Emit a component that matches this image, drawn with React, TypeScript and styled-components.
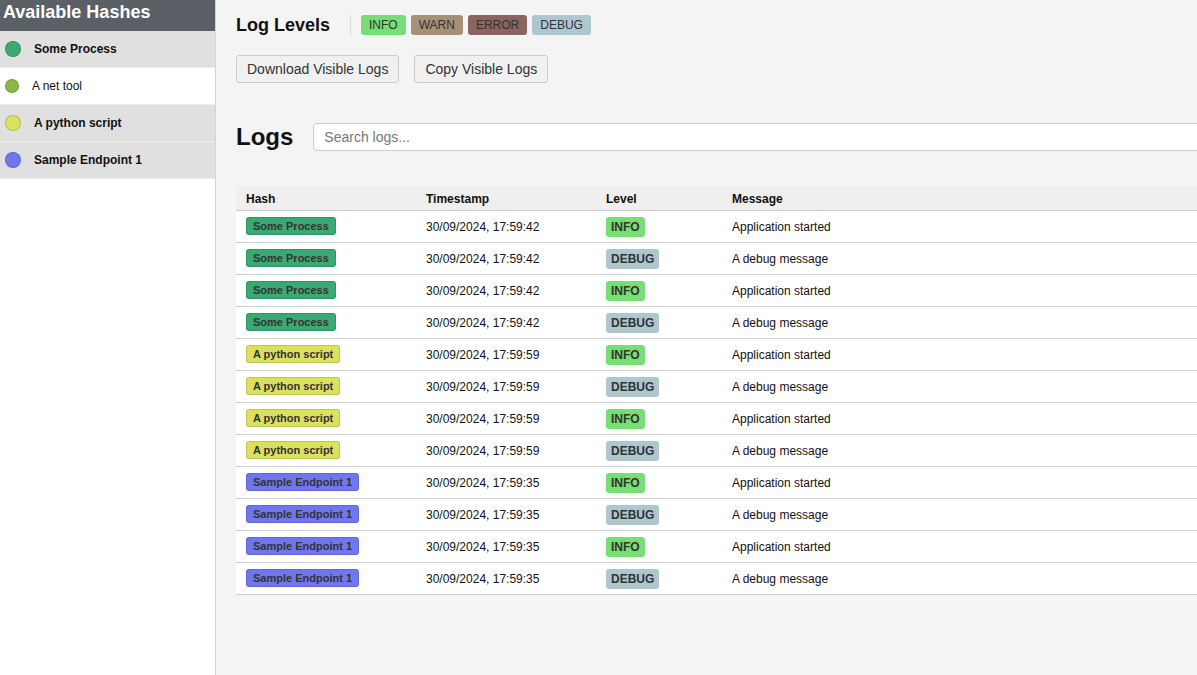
import styled, { createGlobalStyle } from 'styled-components'

const GlobalStyle = createGlobalStyle`
  html, body {
    margin: 0;
    padding: 0;
    background: #f4f4f4;
    font-family: "Liberation Sans", Arial, sans-serif;
    color: #111;
    overflow: hidden;
  }
`

const Layout = styled.div`
  display: flex;
  width: 100vw;
  height: 100vh;
  overflow: hidden;
`

const Sidebar = styled.aside`
  flex: 0 0 215px;
  background: #fff;
  border-right: 1px solid #d4d4d4;
  display: flex;
  flex-direction: column;
`

const SidebarTitle = styled.h2`
  margin: 0;
  height: 31px;
  padding: 0 3px;
  box-sizing: border-box;
  background: #5a6066;
  color: #fff;
  font-size: 18px;
  font-weight: bold;
  line-height: 24px;
`

const HashItem = styled.div<{ $active: boolean }>`
  display: flex;
  align-items: center;
  gap: 13px;
  height: 36px;
  padding: 0 5px;
  border-bottom: 1px solid #efefef;
  background: ${p => (p.$active ? '#e0e0e0' : '#fff')};
  font-size: 12px;
  font-weight: ${p => (p.$active ? 'bold' : 'normal')};
  color: #111;
`

const Dot = styled.span<{ $color: string; $size: number }>`
  width: ${p => p.$size}px;
  height: ${p => p.$size}px;
  box-sizing: border-box;
  border-radius: 50%;
  background: ${p => p.$color};
  border: 1px solid rgba(0, 0, 0, 0.15);
  flex-shrink: 0;
`

const Main = styled.main`
  flex: 0 0 1120px;
  padding: 10px 20px;
  box-sizing: border-box;
`

const Toolbar = styled.div`
  display: flex;
  align-items: center;
  height: 30px;
`

const ToolbarTitle = styled.h3`
  margin: 0;
  font-size: 18px;
  font-weight: bold;
`

const Divider = styled.span`
  width: 1px;
  height: 21px;
  background: #dcdcdc;
  margin: 0 10px 0 20px;
`

const Chips = styled.div`
  display: flex;
  gap: 5px;
`

const Chip = styled.span<{ $bg: string }>`
  background: ${p => p.$bg};
  color: #333;
  font-size: 12px;
  line-height: 14px;
  padding: 3px 8px;
  border-radius: 3px;
`

const ButtonRow = styled.div`
  display: flex;
  gap: 15px;
  margin-top: 15px;
`

const Button = styled.button`
  font-family: inherit;
  font-size: 14px;
  line-height: 16px;
  padding: 5px 10px;
  background: #f0f0f0;
  color: #333;
  border: 1px solid #ccc;
  border-radius: 3px;
`

const LogsHeader = styled.div`
  display: flex;
  align-items: center;
  gap: 20px;
  margin-top: 40px;
`

const LogsTitle = styled.h2`
  margin: 0;
  font-size: 24px;
  font-weight: bold;
`

const Search = styled.input`
  flex: 1;
  height: 28px;
  box-sizing: border-box;
  padding: 0 10px;
  font-family: inherit;
  font-size: 14px;
  border: 1px solid #ccc;
  border-radius: 4px;
  background: #fff;
  &::placeholder {
    color: #777;
  }
`

const Table = styled.table`
  width: 100%;
  margin-top: 35px;
  border-collapse: collapse;
  font-size: 12px;
  background: #fff;
`

const Th = styled.th<{ $w?: number }>`
  text-align: left;
  font-weight: bold;
  background: #efefef;
  padding: 6px 10px 4px;
  line-height: 14px;
  border-bottom: 1px solid #ccc;
  width: ${p => (p.$w ? `${p.$w - 20}px` : 'auto')};
`

const Td = styled.td`
  height: 32px;
  padding: 0 10px;
  box-sizing: border-box;
  border-bottom: 1px solid #ccc;
  vertical-align: middle;
  color: #111;
`

const HashBadge = styled.span<{ $color: string }>`
  display: inline-block;
  background: ${p => p.$color};
  border: 1px solid rgba(0, 0, 0, 0.12);
  border-radius: 3px;
  padding: 2px 6px;
  font-size: 11px;
  line-height: 12px;
  font-weight: bold;
  color: #333;
  margin-top: -2px;
`

const LevelBadge = styled.span<{ $bg: string }>`
  display: inline-block;
  background: ${p => p.$bg};
  border-radius: 3px;
  padding: 3px 5px;
  font-size: 12px;
  line-height: 14px;
  font-weight: bold;
  color: #333;
`

const hashes = [
  { name: 'Some Process', color: '#3ca873', active: true },
  { name: 'A net tool', color: '#88b944', active: false },
  { name: 'A python script', color: '#dbe05e', active: true },
  { name: 'Sample Endpoint 1', color: '#7276ee', active: true },
]

const levelColors: Record<string, string> = {
  INFO: '#77dd77',
  WARN: '#a69178',
  ERROR: '#8b6462',
  DEBUG: '#aec6cf',
}

const logs = [
  { hash: 0, time: '30/09/2024, 17:59:42' },
  { hash: 2, time: '30/09/2024, 17:59:59' },
  { hash: 3, time: '30/09/2024, 17:59:35' },
].flatMap(g =>
  [0, 1, 2, 3].map(i => ({
    hash: hashes[g.hash],
    time: g.time,
    level: i % 2 === 0 ? 'INFO' : 'DEBUG',
    message: i % 2 === 0 ? 'Application started' : 'A debug message',
  }))
)

export default function App() {
  return (
    <>
      <GlobalStyle />
      <Layout>
        <Sidebar>
          <SidebarTitle>Available Hashes</SidebarTitle>
          {hashes.map(h => (
            <HashItem key={h.name} $active={h.active}>
              <Dot $color={h.color} $size={h.active ? 16 : 14} />
              {h.name}
            </HashItem>
          ))}
        </Sidebar>
        <Main>
          <Toolbar>
            <ToolbarTitle>Log Levels</ToolbarTitle>
            <Divider />
            <Chips>
              {Object.keys(levelColors).map(l => (
                <Chip key={l} $bg={levelColors[l]}>{l}</Chip>
              ))}
            </Chips>
          </Toolbar>
          <ButtonRow>
            <Button>Download Visible Logs</Button>
            <Button>Copy Visible Logs</Button>
          </ButtonRow>
          <LogsHeader>
            <LogsTitle>Logs</LogsTitle>
            <Search placeholder="Search logs..." />
          </LogsHeader>
          <Table>
            <thead>
              <tr>
                <Th $w={180}>Hash</Th>
                <Th $w={180}>Timestamp</Th>
                <Th $w={126}>Level</Th>
                <Th>Message</Th>
              </tr>
            </thead>
            <tbody>
              {logs.map((log, i) => (
                <tr key={i}>
                  <Td>
                    <HashBadge $color={log.hash.color}>{log.hash.name}</HashBadge>
                  </Td>
                  <Td>{log.time}</Td>
                  <Td>
                    <LevelBadge $bg={levelColors[log.level]}>{log.level}</LevelBadge>
                  </Td>
                  <Td>{log.message}</Td>
                </tr>
              ))}
            </tbody>
          </Table>
        </Main>
      </Layout>
    </>
  )
}
